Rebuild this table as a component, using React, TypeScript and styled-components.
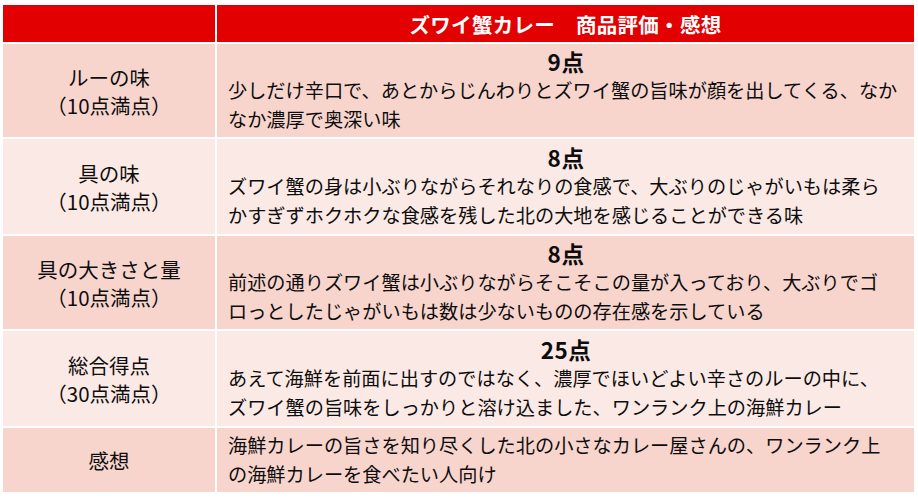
import React from "react"
import styled, { createGlobalStyle } from "styled-components"

const GlobalStyle = createGlobalStyle`
  html, body {
    margin: 0;
    padding: 0;
    background: #ffffff;
  }
  body {
    font-family: "Noto Sans CJK JP", "Noto Sans", sans-serif;
    color: #0d0d0d;
  }
`

const Page = styled.div`
  width: 918px;
  height: 498px;
  padding: 5px 4px 0 3px;
  box-sizing: border-box;
`

const Table = styled.div`
  display: grid;
  grid-template-columns: 212px 1fr;
  grid-template-rows: 37px 93px 95px 93px 95px 64px;
  column-gap: 2px;
  row-gap: 2px;
`

const HeadCell = styled.div`
  background: #e30000;
  color: #ffffff;
  font-weight: 700;
  font-size: 20.5px;
  display: flex;
  align-items: center;
  justify-content: center;
  letter-spacing: 0.3px;
`

const LabelCell = styled.div<{ $dark: boolean }>`
  background: ${p => (p.$dark ? "#f7d5cd" : "#fbe9e5")};
  display: flex;
  flex-direction: column;
  align-items: center;
  justify-content: center;
  font-size: 20.5px;
  line-height: 28px;
  text-align: center;
`

const BodyCell = styled.div<{ $dark: boolean }>`
  background: ${p => (p.$dark ? "#f7d5cd" : "#fbe9e5")};
  display: flex;
  flex-direction: column;
  justify-content: center;
  padding: 0 10px 0 11px;
  font-size: 19.2px;
  line-height: 29px;
`

const Score = styled.div`
  font-weight: 700;
  font-size: 22.5px;
  text-align: center;
  letter-spacing: 0.5px;
`

const Line = styled.div`
  white-space: nowrap;
`

type Row = {
  label: string[]
  score?: string
  lines: string[]
}

const rows: Row[] = [
  {
    label: ["ルーの味", "（10点満点）"],
    score: "9点",
    lines: [
      "少しだけ辛口で、あとからじんわりとズワイ蟹の旨味が顔を出してくる、なか",
      "なか濃厚で奥深い味"
    ]
  },
  {
    label: ["具の味", "（10点満点）"],
    score: "8点",
    lines: [
      "ズワイ蟹の身は小ぶりながらそれなりの食感で、大ぶりのじゃがいもは柔ら",
      "かすぎずホクホクな食感を残した北の大地を感じることができる味"
    ]
  },
  {
    label: ["具の大きさと量", "（10点満点）"],
    score: "8点",
    lines: [
      "前述の通りズワイ蟹は小ぶりながらそこそこの量が入っており、大ぶりでゴ",
      "ロっとしたじゃがいもは数は少ないものの存在感を示している"
    ]
  },
  {
    label: ["総合得点", "（30点満点）"],
    score: "25点",
    lines: [
      "あえて海鮮を前面に出すのではなく、濃厚でほいどよい辛さのルーの中に、",
      "ズワイ蟹の旨味をしっかりと溶け込ました、ワンランク上の海鮮カレー"
    ]
  },
  {
    label: ["感想"],
    lines: [
      "海鮮カレーの旨さを知り尽くした北の小さなカレー屋さんの、ワンランク上",
      "の海鮮カレーを食べたい人向け"
    ]
  }
]

export default function App() {
  return (
    <Page>
      <GlobalStyle />
      <Table>
        <HeadCell />
        <HeadCell>ズワイ蟹カレー　商品評価・感想</HeadCell>
        {rows.map((row, i) => (
          <React.Fragment key={i}>
            <LabelCell $dark={i % 2 === 0}>
              {row.label.map(l => (
                <Line key={l}>{l}</Line>
              ))}
            </LabelCell>
            <BodyCell $dark={i % 2 === 0}>
              {row.score && <Score>{row.score}</Score>}
              {row.lines.map(l => (
                <Line key={l}>{l}</Line>
              ))}
            </BodyCell>
          </React.Fragment>
        ))}
      </Table>
    </Page>
  )
}
